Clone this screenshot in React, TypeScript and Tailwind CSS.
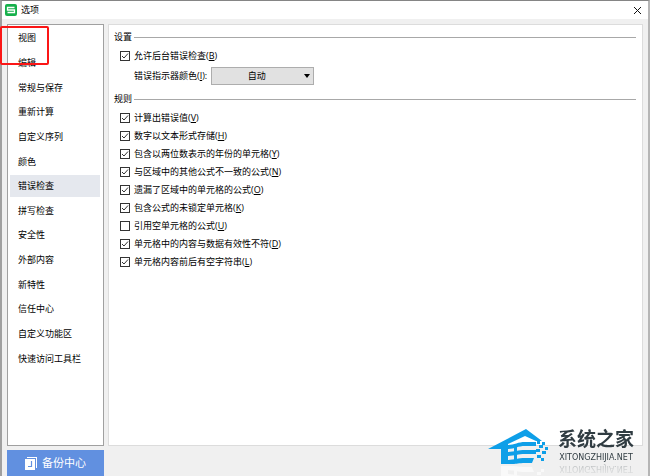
import React from 'react';

const categories = [
  '视图',
  '编辑',
  '常规与保存',
  '重新计算',
  '自定义序列',
  '颜色',
  '错误检查',
  '拼写检查',
  '安全性',
  '外部内容',
  '新特性',
  '信任中心',
  '自定义功能区',
  '快速访问工具栏',
];

const rules = [
  { label: '计算出错误值', accessKey: 'V', checked: true },
  { label: '数字以文本形式存储', accessKey: 'H', checked: true },
  { label: '包含以两位数表示的年份的单元格', accessKey: 'Y', checked: true },
  { label: '与区域中的其他公式不一致的公式', accessKey: 'N', checked: true },
  { label: '遗漏了区域中的单元格的公式', accessKey: 'O', checked: true },
  { label: '包含公式的未锁定单元格', accessKey: 'K', checked: true },
  { label: '引用空单元格的公式', accessKey: 'U', checked: false },
  { label: '单元格中的内容与数据有效性不符', accessKey: 'D', checked: true },
  { label: '单元格内容前后有空字符串', accessKey: 'L', checked: true },
];

type OptionProps = {
  label: string;
  accessKey: string;
  checked: boolean;
};

function Option({ label, accessKey, checked }: OptionProps) {
  return (
    <label className="flex h-[18px] items-center gap-1">
      <span className="grid shrink-0">
        <input
          type="checkbox"
          defaultChecked={checked}
          className="peer col-start-1 row-start-1 size-[10px] appearance-none border border-[#333] bg-white"
        />
        <svg
          viewBox="0 0 10 10"
          className="pointer-events-none invisible col-start-1 row-start-1 size-[10px] peer-checked:visible"
        >
          <path d="M2 5l2 2 4-4.5" fill="none" stroke="#333" strokeWidth="1" />
        </svg>
      </span>
      <span>
        {label}(<u>{accessKey}</u>)
      </span>
    </label>
  );
}

function SectionTitle({ children }: { children: React.ReactNode }) {
  return (
    <div className="flex h-4 items-center gap-[2px]">
      <h2>{children}</h2>
      <div className="h-px flex-1 bg-[#a8a8a8]" />
    </div>
  );
}

function House() {
  return (
    <svg viewBox="0 0 62 36" className="h-9 w-[62px]" fill="currentColor">
      <path d="M0 20L38 0l16 12h-6L37 7 20 15v5z" />
      <path d="M13 17h7v18h-7z" />
      <path d="M19 16c7 0 11-3 18-3h11v4H37c-7 0-11 3-18 3z" />
      <path d="M19 23c7 0 11-2 18-2h11v4H37c-7 0-11 2-18 2z" />
      <path d="M19 31c7 0 11-2 18-2h9l-2 5h-7c-6 0-9 1-12 1h-6z" />
      <path d="M26 15h3v19h-3z" />
      <path d="M49 12h3v3h-3zM54 13h3v3h-3zM51 16h4v3h-4zM57 18h3v3h-3zM48 20h4v3h-4zM54 22h4v3h-4zM49 26h4v3h-4zM53 29h3v3h-3z" />
    </svg>
  );
}

function Brand() {
  return (
    <div className="flex gap-2">
      <div className="relative shrink-0 pt-[3px] text-[#0e9fe8]">
        <House />
        <div
          aria-hidden="true"
          className="absolute top-full left-0 h-[11px] -scale-y-100 overflow-hidden text-white opacity-60"
        >
          <div className="flex h-full items-end">
            <House />
          </div>
        </div>
      </div>
      <div className="self-start text-center text-[#303c42] [-webkit-box-reflect:below_0px_linear-gradient(transparent_60%,rgba(0,0,0,0.3))]">
        <p className="text-[19px] leading-[27px] font-bold">系统之家</p>
        <p className="font-['DejaVu_Sans',sans-serif] text-[8px] leading-[10px]">XITONGZHIJIA.NET</p>
      </div>
    </div>
  );
}

export default function App() {
  return (
    <div className="relative flex min-h-screen flex-col border-x-2 border-t border-t-[#858585] border-r-[#b5b5b5] border-l-[#a0a0a0] bg-[#f0f0f0] font-['Open_Sans','Noto_Sans_CJK_SC',sans-serif] text-[9px] leading-3 text-black">
      <header className="flex h-[18px] items-center bg-white pr-[6px] pl-[3px]">
        <svg viewBox="0 0 12 12" className="size-3">
          <rect width="12" height="12" rx="2" fill="#16b04b" />
          <path d="M9.5 3.5h-7V6h7v2.5h-7" fill="none" stroke="#fff" strokeWidth="1.3" />
        </svg>
        <h1 className="ml-1 flex-1">选项</h1>
        <button type="button" aria-label="关闭">
          <svg viewBox="0 0 9 9" className="size-[9px]">
            <path d="M1 1l7 7M8 1l-7 7" stroke="#111" />
          </svg>
        </button>
      </header>

      <main className="flex flex-1 gap-1 px-[5px] pt-[5px]">
        <nav className="w-[97px] shrink-0 border border-[#a0a0a0] bg-white px-[2px] pt-px">
          <ul className="grid h-[345px] auto-rows-fr">
            {categories.map((name) => (
              <li key={name} className="flex items-center">
                <button
                  type="button"
                  className={
                    name === '错误检查'
                      ? 'h-[22px] w-[90px] bg-[#e5e8ee] pl-2 text-left'
                      : 'h-[22px] w-[90px] pl-2 text-left'
                  }
                >
                  {name}
                </button>
              </li>
            ))}
          </ul>
        </nav>

        <section className="flex-1 border border-[#dcdcdc] bg-white pt-1 pr-[6px] pl-[5px]">
          <SectionTitle>设置</SectionTitle>
          <div className="pt-[2px] pl-[6px]">
            <Option label="允许后台错误检查" accessKey="B" checked />
            <div className="mt-[2px] flex items-center gap-1 pl-[14px]">
              <label htmlFor="indicator">
                错误指示器颜色(<u>I</u>):
              </label>
              <div className="grid items-center">
                <select
                  id="indicator"
                  className="col-start-1 row-start-1 h-[18px] w-[103px] appearance-none border border-[#adadad] bg-[#e1e1e1] pr-[12px] text-center"
                >
                  <option>自动</option>
                </select>
                <svg
                  viewBox="0 0 6 4"
                  className="pointer-events-none col-start-1 row-start-1 mr-1 h-1 w-[6px] justify-self-end"
                >
                  <path d="M0 0h6L3 4z" fill="#000" />
                </svg>
              </div>
            </div>
          </div>
          <div className="pt-[6px]">
            <SectionTitle>规则</SectionTitle>
          </div>
          <div className="pt-[2px] pl-[6px]">
            {rules.map((rule) => (
              <Option key={rule.accessKey} {...rule} />
            ))}
          </div>
        </section>
      </main>

      <footer className="px-[5px] pt-1">
        <button
          type="button"
          className="flex h-[26px] w-[97px] items-center justify-center gap-[5px] bg-[#6190e0] text-[11px] text-white"
        >
          <svg viewBox="0 0 12 13" className="h-[13px] w-3">
            <path d="M2 0h10v11h-1V1H2z" fill="#fff" />
            <path d="M0 2h10v11H0z" fill="#fff" />
            <path d="M6.5 4v5.5H3" fill="none" stroke="#6190e0" strokeWidth="1.2" />
          </svg>
          备份中心
        </button>
      </footer>

      {/* highlight around the first category */}
      <div className="absolute top-[25px] -left-[2px] h-[39px] w-[49px] rounded-[2px] border-2 border-[#fb1616]" />

      {/* site logo over the lower right corner */}
      <div className="absolute right-[14px] bottom-[11px]">
        <Brand />
      </div>
    </div>
  );
}
